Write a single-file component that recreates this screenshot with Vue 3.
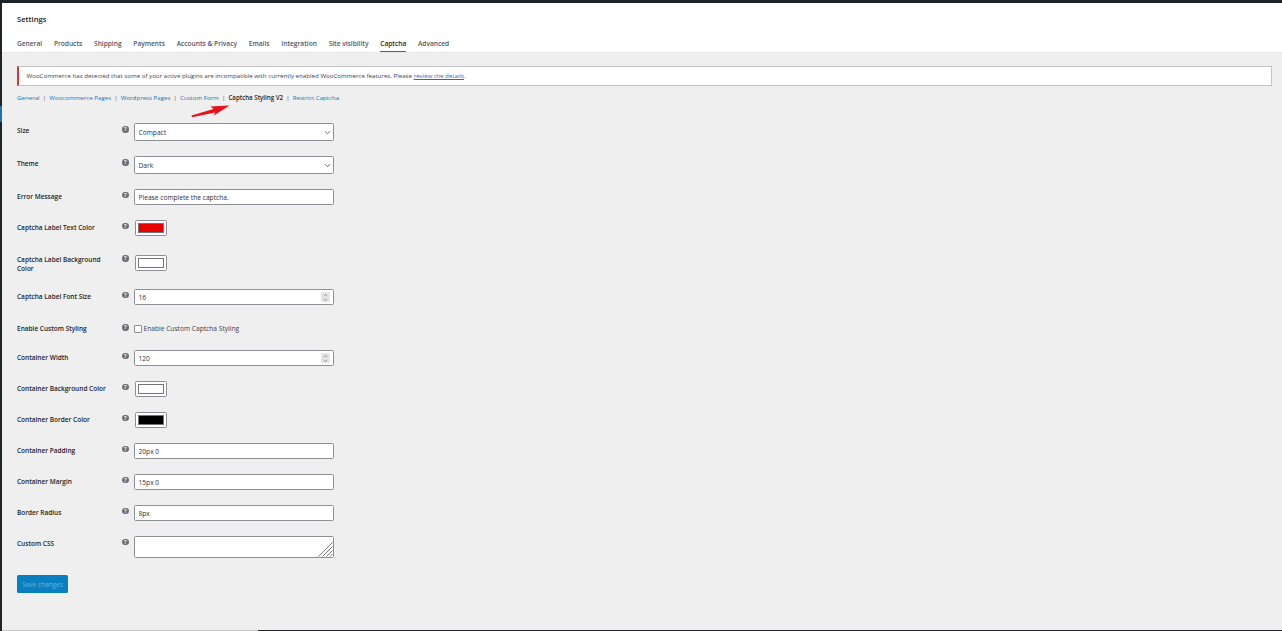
<script setup>
const tabs = ['General', 'Products', 'Shipping', 'Payments', 'Accounts & Privacy', 'Emails', 'Integration', 'Site visibility', 'Captcha', 'Advanced'];
const subLinks = ['General', 'Woocommerce Pages', 'Wordpress Pages', 'Custom Form', 'Captcha Styling V2', 'Restrict Captcha'];

const rows = [
  { label: 'Size', type: 'select', value: 'Compact' },
  { label: 'Theme', type: 'select', value: 'Dark' },
  { label: 'Error Message', type: 'text', value: 'Please complete the captcha.' },
  { label: 'Captcha Label Text Color', type: 'color', value: '#e60000' },
  { label: 'Captcha Label Background Color', type: 'color', value: '#ffffff', cls: 'wrap' },
  { label: 'Captcha Label Font Size', type: 'number', value: '16', cls: 'before-check' },
  { label: 'Enable Custom Styling', type: 'checkbox', value: 'Enable Custom Captcha Styling' },
  { label: 'Container Width', type: 'number', value: '120' },
  { label: 'Container Background Color', type: 'color', value: '#ffffff' },
  { label: 'Container Border Color', type: 'color', value: '#000000' },
  { label: 'Container Padding', type: 'text', value: '20px 0' },
  { label: 'Container Margin', type: 'text', value: '15px 0' },
  { label: 'Border Radius', type: 'text', value: '8px' },
  { label: 'Custom CSS', type: 'textarea', value: '' },
];
</script>

<template>
  <div class="page">
    <aside class="rail"><span class="rail-mark"></span></aside>
    <div class="main">
      <header class="top">
        <h1 class="title">Settings</h1>
        <nav class="tabs">
          <a v-for="t in tabs" :key="t" :class="['tab', { active: t === 'Captcha' }]">{{ t }}</a>
        </nav>
      </header>

      <section class="content">
        <div class="notice">
          WooCommerce has detected that some of your active plugins are incompatible with currently enabled WooCommerce features. Please
          <a class="notice-link">review the details</a>.
        </div>

        <div class="sublinks">
          <template v-for="(s, i) in subLinks" :key="s">
            <span v-if="i > 0" class="sep">|</span>
            <a :class="['sublink', { current: s === 'Captcha Styling V2' }]">{{ s }}</a>
          </template>
        </div>

        <!-- annotation from the screenshot -->
        <svg class="arrow" width="42" height="16" viewBox="0 0 42 16">
          <path d="M1 13.2 L24 8.6 L23 11.6 L38.5 1.5 L19.5 2.5 L22.5 5 L0.5 11.6 Z" fill="#e8101a" />
        </svg>

        <form class="form" @submit.prevent>
          <div v-for="r in rows" :key="r.label" :class="['row', 'row-' + r.type, r.cls]">
            <label class="label">{{ r.label }}</label>
            <span class="help">?</span>
            <div class="field">
              <template v-if="r.type === 'select'">
                <select class="control select">
                  <option>{{ r.value }}</option>
                </select>
                <svg class="chevron" width="7" height="5" viewBox="0 0 7 5">
                  <path d="M1 1.2 L3.5 3.7 L6 1.2" fill="none" stroke="#50575e" stroke-width="0.9" />
                </svg>
              </template>
              <input v-else-if="r.type === 'text'" class="control" type="text" :value="r.value" />
              <template v-else-if="r.type === 'number'">
                <input class="control" type="text" :value="r.value" />
                <span class="spin">
                  <svg width="5" height="9" viewBox="0 0 5 9">
                    <path d="M0.8 3.2 L2.5 1.2 L4.2 3.2 M0.8 5.8 L2.5 7.8 L4.2 5.8" fill="none" stroke="#77797d" stroke-width="0.7" />
                  </svg>
                </span>
              </template>
              <input v-else-if="r.type === 'color'" class="color" type="color" :value="r.value" />
              <label v-else-if="r.type === 'checkbox'" class="check">
                <input class="checkbox" type="checkbox" />
                <span>{{ r.value }}</span>
              </label>
              <template v-else>
                <textarea class="control area"></textarea>
                <svg class="grip" width="15" height="15" viewBox="0 0 15 15">
                  <path d="M0.5 14.5 L14.5 0.5 M4.5 14.5 L14.5 4.5 M8.5 14.5 L14.5 8.5 M12 14.5 L14.5 12" stroke="#77797d" stroke-width="1" fill="none" />
                </svg>
              </template>
            </div>
          </div>

          <button class="save" type="button" disabled>Save changes</button>
        </form>
      </section>

      <footer class="foot"><span class="foot-light"></span><span class="foot-dark"></span></footer>
    </div>
  </div>
</template>

<style>
html, body {
  margin: 0;
  height: 100%;
  overflow: hidden;
  background: #f0f0f1;
}
</style>

<style scoped>
.page {
  display: flex;
  height: 631px;
  font-family: "Open Sans", "Noto Sans", sans-serif;
  font-size: 6.5px;
  color: #3c434a;
  background: #1d2327;
}

.rail {
  width: 2px;
  flex: none;
  padding-top: 106px;
  box-sizing: border-box;
}
.rail-mark {
  display: block;
  width: 2px;
  height: 16px;
  background: #2271b1;
}

.main {
  flex: 1;
  min-width: 0;
  display: flex;
  flex-direction: column;
  padding-top: 3px;
}

.top {
  height: 50px;
  flex: none;
  box-sizing: border-box;
  background: #fff;
  border-bottom: 1px solid #e6e6e7;
  padding: 0 15px;
  display: flex;
  flex-direction: column;
}
.title {
  margin: 0;
  padding-top: 12px;
  height: 24px;
  box-sizing: content-box;
  font-size: 7.6px;
  line-height: 9px;
  font-weight: 600;
  color: #1d2327;
}
.tabs {
  display: flex;
  gap: 11.8px;
  margin-top: 0;
}
.tab {
  font-size: 6.6px;
  font-weight: 600;
  line-height: 9px;
  height: 13px;
  color: #50575e;
}
.tab.active {
  color: #1d2327;
  height: 12px;
  border-bottom: 1.5px solid #2271b1;
}

.content {
  position: relative;
  flex: 1;
  min-height: 0;
  background: #efefef;
  padding: 13px 10px 0 15px;
}

.notice {
  height: 20px;
  box-sizing: border-box;
  background: #fff;
  border: 1px solid #c3c4c7;
  border-left: 2px solid #d63638;
  padding: 0 7.5px;
  line-height: 18px;
  font-size: 6.16px;
  color: #3c434a;
}
.notice-link {
  color: #2271b1;
  text-decoration: underline;
}

.sublinks {
  display: flex;
  align-items: baseline;
  margin-top: 6px;
  height: 11px;
  line-height: 11px;
  font-size: 6.15px;
  color: #50575e;
}
.sublink {
  color: #2271b1;
}
.sublink.current {
  color: #1d2327;
  font-weight: 600;
}
.sep {
  margin: 0 3.15px;
}

.arrow {
  position: absolute;
  left: 189px;
  top: 51px;
}

.form {
  margin-top: 20px;
}

.row {
  display: flex;
  align-items: flex-start;
  padding-bottom: 15px;
}
.label {
  width: 103px;
  flex: none;
  box-sizing: border-box;
  padding-right: 12px;
  font-weight: 600;
  font-size: 6.5px;
  line-height: 9px;
  color: #1d2327;
  padding-top: 3px;
}
.help {
  width: 6.5px;
  height: 6.5px;
  flex: none;
  margin: 2.5px 5px 0 2px;
  border-radius: 50%;
  background: #6b6e72;
  color: #efefef;
  font-size: 5.5px;
  font-weight: 700;
  line-height: 6.5px;
  text-align: center;
}
.field {
  position: relative;
  width: 200px;
  flex: none;
}

.control {
  display: block;
  width: 100%;
  height: 16px;
  box-sizing: border-box;
  margin: 0;
  padding: 0 4px;
  background: #fff;
  border: 1px solid #8c8f94;
  border-radius: 1.5px;
  font-family: inherit;
  font-size: 6.65px;
  color: #2c3338;
  outline: none;
}
.select {
  height: 18px;
  appearance: none;
}
.chevron {
  position: absolute;
  right: 2.5px;
  top: 7px;
  pointer-events: none;
}
.spin {
  position: absolute;
  right: 4px;
  top: 3px;
  width: 9px;
  height: 10px;
  background: #e6e6e6;
  display: flex;
  align-items: center;
  justify-content: center;
}

.row-select .label { padding-top: 3px; }
.row-select .help { margin-top: 3px; }

.color {
  display: block;
  width: 32px;
  height: 16px;
  margin: 0 0 0 1px;
  padding: 2px;
  box-sizing: border-box;
  background: #fff;
  border: 1px solid #8c8f94;
  border-radius: 1.5px;
}
.color::-webkit-color-swatch-wrapper {
  padding: 0;
}
.color::-webkit-color-swatch {
  border: 0.7px solid #767676;
  border-radius: 0;
}

.check {
  display: flex;
  align-items: center;
  gap: 2px;
  height: 9px;
  font-size: 6.65px;
  color: #3c434a;
}
.checkbox {
  width: 8px;
  height: 8px;
  margin: 0;
  appearance: none;
  box-sizing: border-box;
  background: #fff;
  border: 1px solid #8c8f94;
  border-radius: 1px;
}
.row-checkbox {
  padding-bottom: 17px;
}
.row-checkbox .label { padding-top: 0; }
.row-checkbox .help { margin-top: 0; }

.area {
  height: 22px;
  resize: none;
}
.grip {
  position: absolute;
  right: 1px;
  bottom: 1px;
  pointer-events: none;
}

.wrap { padding-top: 4px; padding-bottom: 16px; }
.wrap .label { padding-top: 0; }
.wrap .help { margin-top: 0; }
.before-check { padding-bottom: 19px; }
.row-textarea { padding-bottom: 17px; }

.save {
  display: block;
  width: 51px;
  height: 18px;
  padding: 0;
  border: 0;
  border-radius: 1.5px;
  background: #0a7fc0;
  color: #66b4dd;
  font-family: inherit;
  font-size: 6.5px;
}

.foot {
  height: 1px;
  flex: none;
  display: flex;
}
.foot-light {
  width: 256px;
  background: #c3c4c7;
}
.foot-dark {
  flex: 1;
  background: #1d2327;
}
</style>
